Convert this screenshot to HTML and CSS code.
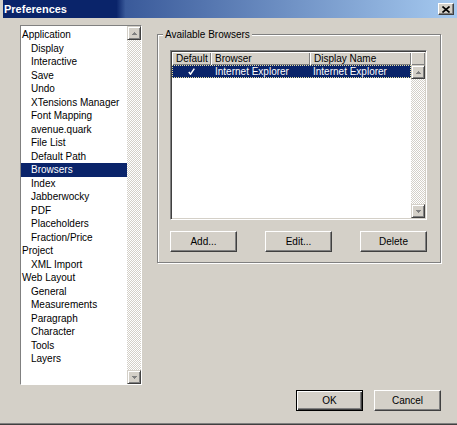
FILE: index.html
```html
<!DOCTYPE html>
<html>
<head>
<meta charset="utf-8">
<title>Preferences</title>
<link rel="stylesheet" href="styles.css">
</head>
<body>
<div class="window">
  <div class="titlebar">
    <span class="title">Preferences</span>
    <div class="close">
      <svg width="8" height="7" viewBox="0 0 8 7"><path d="M0.5 0.5L7.5 6.5M7.5 0.5L0.5 6.5" stroke="#000" stroke-width="1.6"/></svg>
    </div>
  </div>
  <div class="main">
    <div class="tree">
      <ul class="tree-items">
        <li class="lvl0">Application</li>
        <li class="lvl1">Display</li>
        <li class="lvl1">Interactive</li>
        <li class="lvl1">Save</li>
        <li class="lvl1">Undo</li>
        <li class="lvl1">XTensions Manager</li>
        <li class="lvl1">Font Mapping</li>
        <li class="lvl1">avenue.quark</li>
        <li class="lvl1">File List</li>
        <li class="lvl1">Default Path</li>
        <li class="lvl1 sel">Browsers</li>
        <li class="lvl1">Index</li>
        <li class="lvl1">Jabberwocky</li>
        <li class="lvl1">PDF</li>
        <li class="lvl1">Placeholders</li>
        <li class="lvl1">Fraction/Price</li>
        <li class="lvl0">Project</li>
        <li class="lvl1">XML Import</li>
        <li class="lvl0">Web Layout</li>
        <li class="lvl1">General</li>
        <li class="lvl1">Measurements</li>
        <li class="lvl1">Paragraph</li>
        <li class="lvl1">Character</li>
        <li class="lvl1">Tools</li>
        <li class="lvl1">Layers</li>
      </ul>
      <div class="vscroll">
        <div class="sbtn"><svg width="5" height="3" viewBox="0 0 5 3"><path d="M2 0h1v1h1v1h1v1H0V2h1V1h1z" fill="#808080"/></svg></div>
        <div class="track"></div>
        <div class="sbtn"><svg width="5" height="3" viewBox="0 0 5 3"><path d="M0 0h5v1H4v1H3v1H2V2H1V1H0z" fill="#808080"/></svg></div>
      </div>
    </div>
    <div class="group">
      <span class="group-label">Available Browsers</span>
      <div class="listview">
        <div class="lv-header">
          <div class="hcell c1">Default</div>
          <div class="hcell c2">Browser</div>
          <div class="hcell c3">Display Name</div>
          <div class="hcell filler"></div>
        </div>
        <div class="lv-body">
          <div class="rows">
            <div class="row selected">
              <div class="cell c1 center"><svg width="7" height="7" viewBox="0 0 7 7"><path d="M0.8 4L2.5 6.2L6.3 0.6" stroke="#fff" stroke-width="1.5" fill="none"/></svg></div>
              <div class="cell c2">Internet Explorer</div>
              <div class="cell c3">Internet Explorer</div>
            </div>
          </div>
          <div class="vscroll">
            <div class="sbtn"><svg width="5" height="3" viewBox="0 0 5 3"><path d="M2 0h1v1h1v1h1v1H0V2h1V1h1z" fill="#808080"/></svg></div>
            <div class="track"></div>
            <div class="sbtn"><svg width="5" height="3" viewBox="0 0 5 3"><path d="M0 0h5v1H4v1H3v1H2V2H1V1H0z" fill="#808080"/></svg></div>
          </div>
        </div>
      </div>
      <div class="btn-row">
        <div class="btn">Add...</div>
        <div class="btn">Edit...</div>
        <div class="btn">Delete</div>
      </div>
    </div>
  </div>
  <div class="footer">
    <div class="btn default">OK</div>
    <div class="btn">Cancel</div>
  </div>
</div>
</body>
</html>
```

FILE: styles.css
```css
* {
  box-sizing: border-box;
  margin: 0;
  padding: 0;
}

body {
  margin: 0;
  background: #d4d0c8;
  font-family: "Liberation Sans", Arial, sans-serif;
  font-size: 10px;
  color: #000;
}

.window {
  width: 457px;
  height: 425px;
  display: flex;
  flex-direction: column;
  background: #d4d0c8;
  border-bottom: 1px solid #404040;
  box-shadow: inset 0 -1px 0 #808080;
  overflow: hidden;
}

.titlebar {
  height: 18px;
  margin-left: 3px;
  display: flex;
  align-items: center;
  justify-content: space-between;
  padding: 0 3px 0 1px;
  background: linear-gradient(90deg, #0a246a 0%, #0a246a 25%, #3a5a9a 27%, #a6caf0 100%);
}

.title {
  color: #fff;
  font-weight: bold;
  font-size: 11px;
  line-height: 18px;
}

.close {
  width: 16px;
  height: 12px;
  background: #d4d0c8;
  border: 1px solid;
  border-color: #fff #404040 #404040 #fff;
  box-shadow: inset -1px -1px 0 #808080;
  display: flex;
  align-items: center;
  justify-content: center;
}

.main {
  display: flex;
  align-items: flex-start;
  padding: 7px 0 0 20px;
}

.tree {
  width: 122px;
  height: 360px;
  background: #fff;
  border: 1px solid;
  border-color: #808080 #fff #fff #808080;
  display: flex;
}

.tree-items {
  list-style: none;
  flex: 1;
  padding-top: 2px;
}

.tree-items li {
  height: 13.5px;
  line-height: 13.5px;
  white-space: nowrap;
  overflow: hidden;
}

.lvl0 {
  padding-left: 1px;
}

.lvl1 {
  padding-left: 10px;
}

.tree-items li.sel {
  background: #0a246a;
  color: #fff;
}

.vscroll {
  width: 14px;
  display: flex;
  flex-direction: column;
  background: repeating-conic-gradient(#ffffff 0 25%, #d4d0c8 0 50%) 0 0 / 2px 2px;
}

.track {
  flex: 1;
}

.sbtn {
  width: 14px;
  height: 14px;
  background: #d4d0c8;
  border: 1px solid;
  border-color: #d4d0c8 #404040 #404040 #d4d0c8;
  box-shadow: inset 1px 1px 0 #fff, inset -1px -1px 0 #808080;
  display: flex;
  align-items: center;
  justify-content: center;
}

.group {
  position: relative;
  margin: 9px 0 0 15px;
  width: 284px;
  height: 229px;
  border: 1px solid #808080;
  box-shadow: inset 1px 1px 0 #fff, 1px 1px 0 #fff;
  padding: 15px 0 0 12px;
}

.group-label {
  position: absolute;
  top: -6px;
  left: 5px;
  padding: 0 2px;
  line-height: 12px;
  background: #d4d0c8;
  white-space: nowrap;
}

.listview {
  width: 257px;
  height: 170px;
  background: #fff;
  border: 1px solid;
  border-color: #808080 #fff #fff #808080;
  box-shadow: inset 1px 1px 0 #404040, inset -1px -1px 0 #d4d0c8;
  padding: 1px;
  display: flex;
  flex-direction: column;
}

.lv-header {
  display: flex;
  height: 13px;
}

.hcell {
  height: 13px;
  line-height: 13px;
  padding-left: 4px;
  background: #d4d0c8;
  box-shadow: inset 1px 1px 0 #fff, inset -1px -1px 0 #808080;
  white-space: nowrap;
  overflow: hidden;
}

.c1 {
  width: 39px;
}

.c2 {
  width: 99px;
}

.c3 {
  width: 101px;
}

.filler {
  flex: 1;
}

.lv-body {
  flex: 1;
  display: flex;
}

.rows {
  flex: 1;
}

.row {
  display: flex;
  height: 13px;
  line-height: 13px;
}

.row.selected {
  background: #0a246a;
  color: #fff;
  outline: 1px dotted #e6dfa0;
  outline-offset: -1px;
}

.cell {
  padding-left: 4px;
  white-space: nowrap;
  overflow: hidden;
}

.cell.c2 {
  padding-left: 4px;
}

.cell.c3 {
  padding-left: 3px;
}

.cell.center {
  padding-left: 0;
  display: flex;
  align-items: center;
  justify-content: center;
}

.btn-row {
  display: flex;
  justify-content: space-between;
  width: 257px;
  margin-top: 11px;
}

.btn {
  width: 67px;
  height: 21px;
  background: #d4d0c8;
  border: 1px solid;
  border-color: #fff #404040 #404040 #fff;
  box-shadow: inset -1px -1px 0 #808080;
  display: flex;
  align-items: center;
  justify-content: center;
  line-height: 12px;
}

.btn.default {
  border-color: #000;
  box-shadow: inset 1px 1px 0 #fff, inset -1px -1px 0 #404040, inset -2px -2px 0 #808080;
}

.footer {
  display: flex;
  justify-content: flex-end;
  gap: 11px;
  padding: 5px 16px 0 0;
}
```
